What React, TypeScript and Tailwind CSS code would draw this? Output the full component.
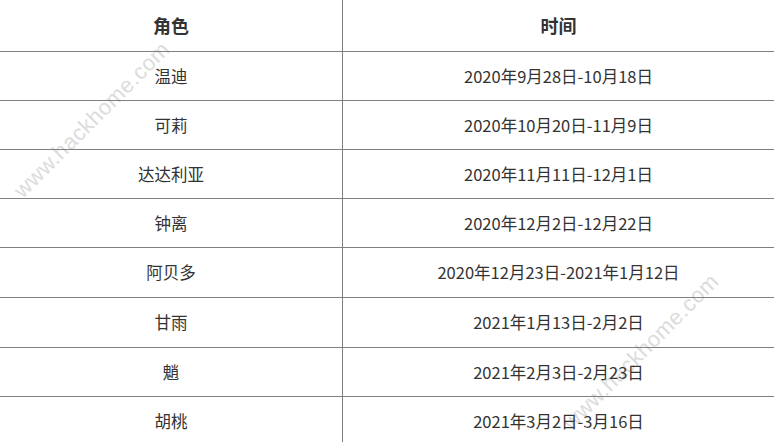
const rows: { name: string; time: string; h: string }[] = [
  { name: '温迪', time: '2020年9月28日-10月18日', h: 'h-[49px]' },
  { name: '可莉', time: '2020年10月20日-11月9日', h: 'h-[49px]' },
  { name: '达达利亚', time: '2020年11月11日-12月1日', h: 'h-[49px]' },
  { name: '钟离', time: '2020年12月2日-12月22日', h: 'h-[49px]' },
  { name: '阿贝多', time: '2020年12月23日-2021年1月12日', h: 'h-[50px]' },
  { name: '甘雨', time: '2021年1月13日-2月2日', h: 'h-[50px]' },
  { name: '魈', time: '2021年2月3日-2月23日', h: 'h-[49px]' },
  { name: '胡桃', time: '2021年3月2日-3月16日', h: 'h-[49px]' },
];

function Watermark({ className }: { className: string }) {
  return (
    <div
      className={`pointer-events-none absolute -translate-x-1/2 -translate-y-1/2 -rotate-[45deg] whitespace-nowrap text-[22px] leading-none tracking-[0.5px] text-[#dcdcdc] font-['Liberation_Sans',Arial,sans-serif] ${className}`}
    >
      www.hackhome.com
    </div>
  );
}

export default function App() {
  return (
    <div className="relative h-[442px] w-[774px] overflow-hidden bg-white font-['Noto_Sans_CJK_SC','Noto_Sans',sans-serif] text-[#333]">
      <Watermark className="left-[92px] top-[120px]" />
      <Watermark className="left-[641px] top-[352px]" />
      <div className="relative">
        <div className="grid h-[52px] grid-cols-[342px_1fr] border-b border-[#808080] text-[18px] font-bold">
          <div className="flex items-center justify-center">角色</div>
          <div className="flex items-center justify-center border-l border-[#808080]">时间</div>
        </div>
        {rows.map((r) => (
          <div
            key={r.name}
            className={`grid grid-cols-[342px_1fr] border-b border-[#808080] text-[16.5px] ${r.h}`}
          >
            <div className="flex items-center justify-center">{r.name}</div>
            <div className="flex items-center justify-center border-l border-[#808080]">{r.time}</div>
          </div>
        ))}
      </div>
    </div>
  );
}
